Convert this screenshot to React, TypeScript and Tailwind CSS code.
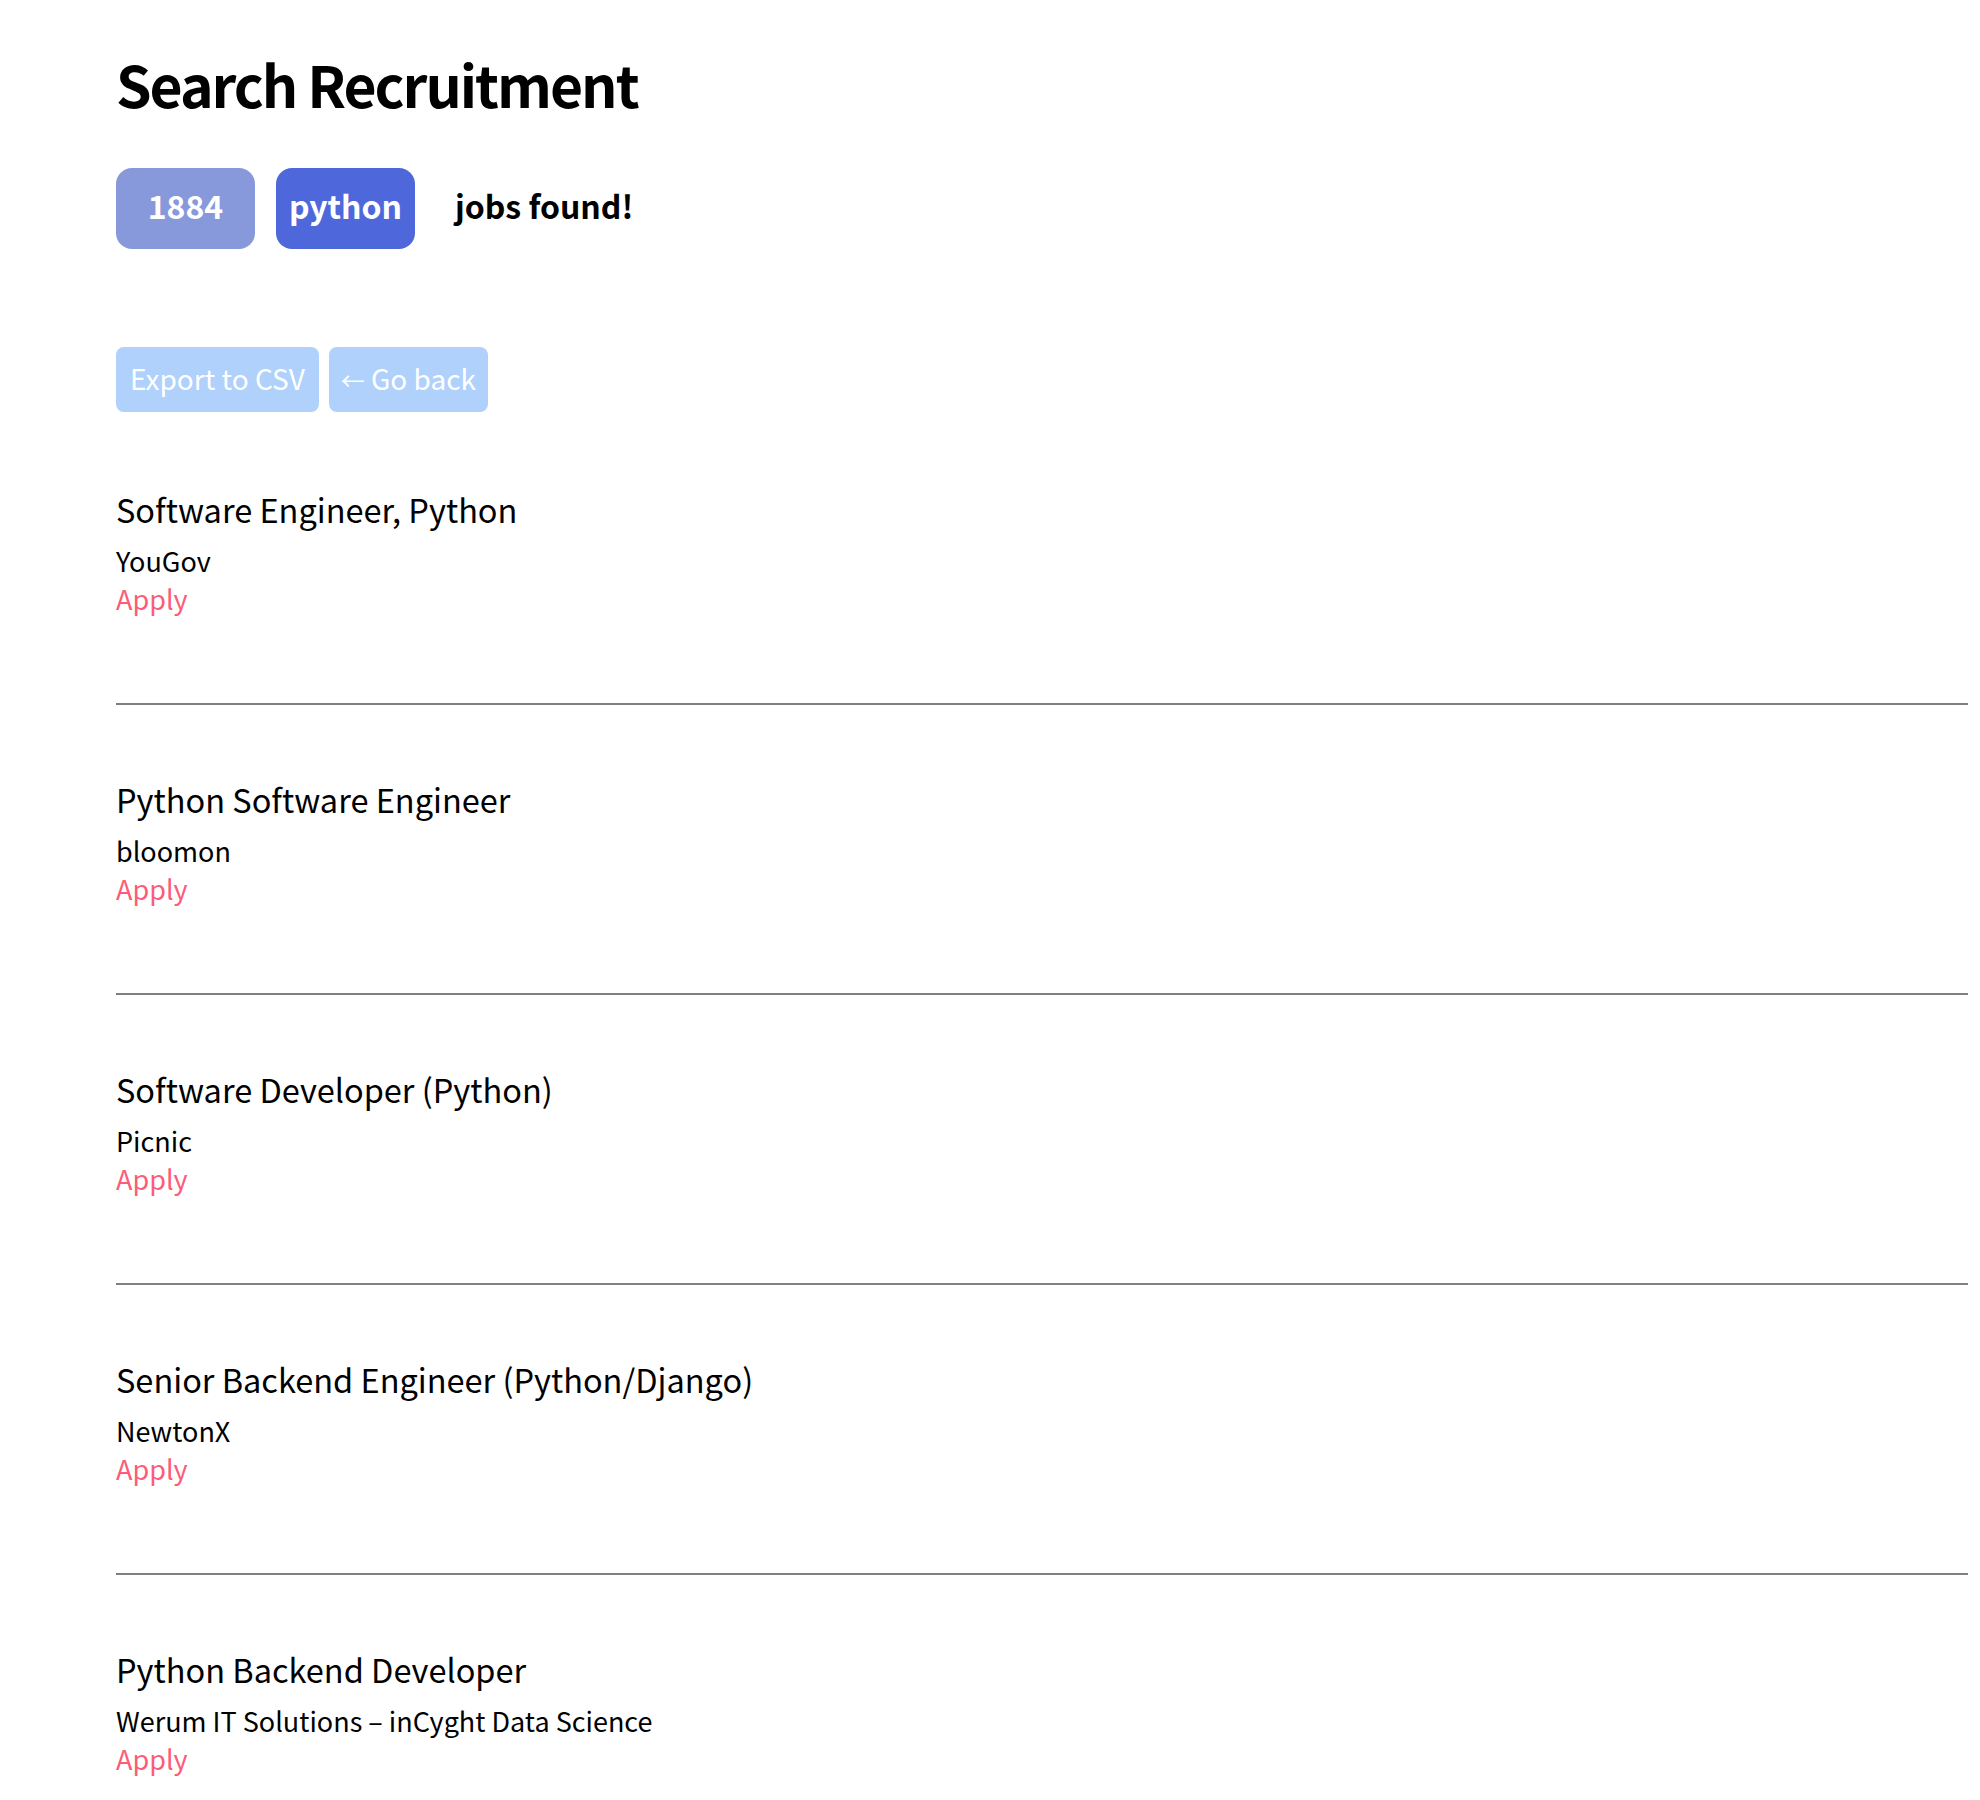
const JOBS = [
  { title: "Software Engineer, Python", company: "YouGov" },
  { title: "Python Software Engineer", company: "bloomon" },
  { title: "Software Developer (Python)", company: "Picnic" },
  { title: "Senior Backend Engineer (Python/Django)", company: "NewtonX" },
  { title: "Python Backend Developer", company: "Werum IT Solutions – inCyght Data Science" },
  { title: "Backend Engineer (Python)", company: "Sennder" },
];

export default function App() {
  return (
    <div className="min-h-screen bg-white pl-[116px] pr-[12px] text-black font-['Noto_Sans_CJK_KR','Noto_Sans',sans-serif]">
      <h1 className="pt-[47px] text-[57px] leading-[72px] font-bold tracking-[-2px]">Search Recruitment</h1>

      <div className="mt-[49px] flex items-center">
        <span className="flex h-[81px] w-[139px] items-center justify-center rounded-[16px] bg-[#8799da] pb-[8px] text-[32px] font-bold text-white">
          1884
        </span>
        <span className="ml-[21px] flex h-[81px] w-[139px] items-center justify-center rounded-[16px] bg-[#4e68dc] pb-[8px] text-[32px] font-bold text-white">
          python
        </span>
        <span className="mb-[8px] ml-[40px] text-[32px] font-bold">jobs found!</span>
      </div>

      <div className="mt-[98px] flex gap-[10px]">
        <button className="h-[65px] rounded-[8px] bg-[#afd1fc] px-[14px] pb-[4px] text-[28px] text-white">
          Export to CSV
        </button>
        <button className="h-[65px] rounded-[8px] bg-[#afd1fc] px-[12px] pb-[4px] text-[28px] text-white">
          <span className="text-[24px]">←</span> Go back
        </button>
      </div>

      <div className="mt-[3px]">
        {JOBS.map((job) => (
          <div key={job.title} className="border-b-2 border-[#808080] pt-[74px] pb-[85px]">
            <h3 className="text-[32.5px] leading-[40px]">{job.title}</h3>
            <p className="mt-[13px] text-[27px] leading-[38px]">{job.company}</p>
            <a href="#" className="block w-fit text-[27px] leading-[38px] text-[#fd5c78]">
              Apply
            </a>
          </div>
        ))}
      </div>
    </div>
  );
}
